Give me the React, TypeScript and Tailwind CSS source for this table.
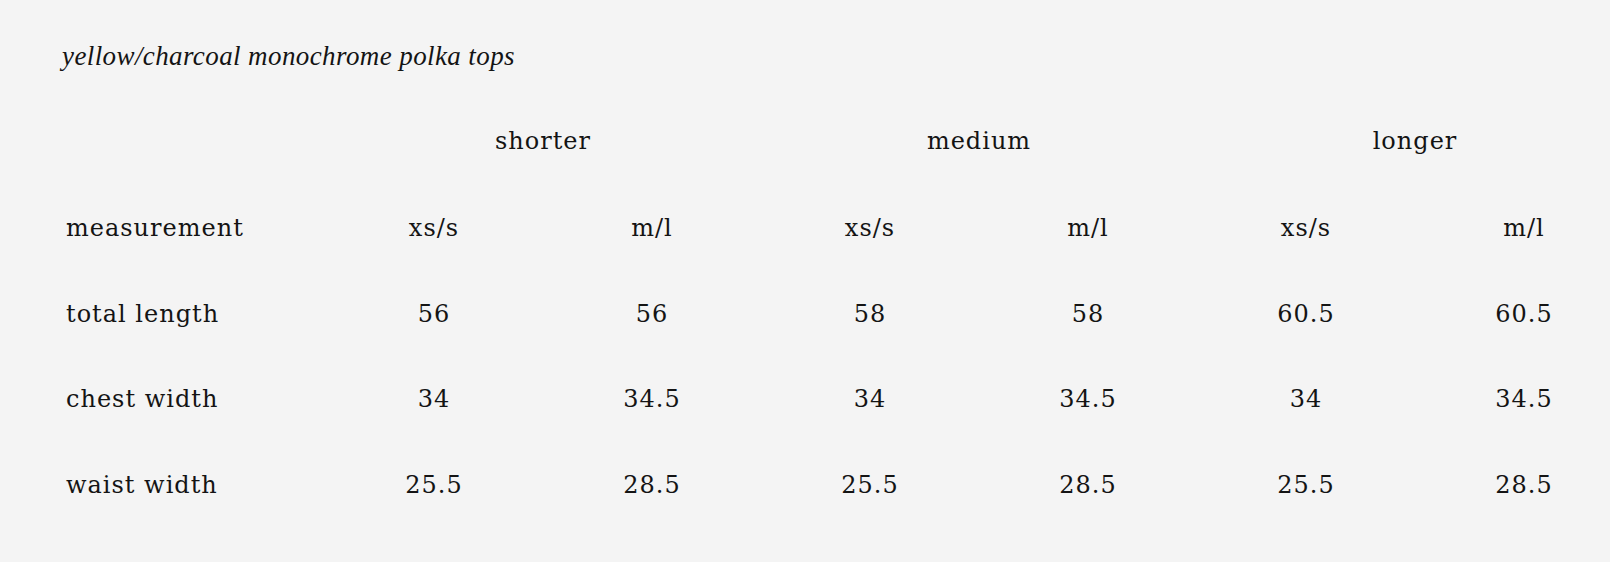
import React from "react";

const sizes = ["xs/s", "m/l", "xs/s", "m/l", "xs/s", "m/l"];

const rows: { label: string; values: string[] }[] = [
  { label: "total length", values: ["56", "56", "58", "58", "60.5", "60.5"] },
  { label: "chest width", values: ["34", "34.5", "34", "34.5", "34", "34.5"] },
  { label: "waist width", values: ["25.5", "28.5", "25.5", "28.5", "25.5", "28.5"] },
];

const serif = { fontFamily: "'DejaVu Serif', serif" };

export default function App() {
  return (
    <div className="min-h-[562px] w-full bg-[#f4f4f4] text-[#141414] overflow-hidden" style={serif}>
      <div className="pl-[62px] pt-[38px]">
        <h2 className="text-[27px] italic leading-[36px] font-['Liberation_Serif',serif] tracking-[0.4px]">
          yellow/charcoal monochrome polka tops
        </h2>
      </div>

      <div className="pl-[66px] pt-[47px] grid grid-cols-[230px_repeat(6,160px)] gap-x-[58px] text-[24px] tracking-[1px] leading-[40px]">
        {/* group headers */}
        <div />
        <div className="col-span-2 text-center">shorter</div>
        <div className="col-span-2 text-center">medium</div>
        <div className="col-span-2 text-center">longer</div>

        {/* size row */}
        <div className="mt-[47px]">measurement</div>
        {sizes.map((s, i) => (
          <div key={i} className="mt-[47px] text-center">
            {s}
          </div>
        ))}

        {rows.map((row) => (
          <React.Fragment key={row.label}>
            <div className="mt-[45.5px]">{row.label}</div>
            {row.values.map((v, i) => (
              <div key={i} className="mt-[45.5px] text-center">
                {v}
              </div>
            ))}
          </React.Fragment>
        ))}
      </div>
    </div>
  );
}
